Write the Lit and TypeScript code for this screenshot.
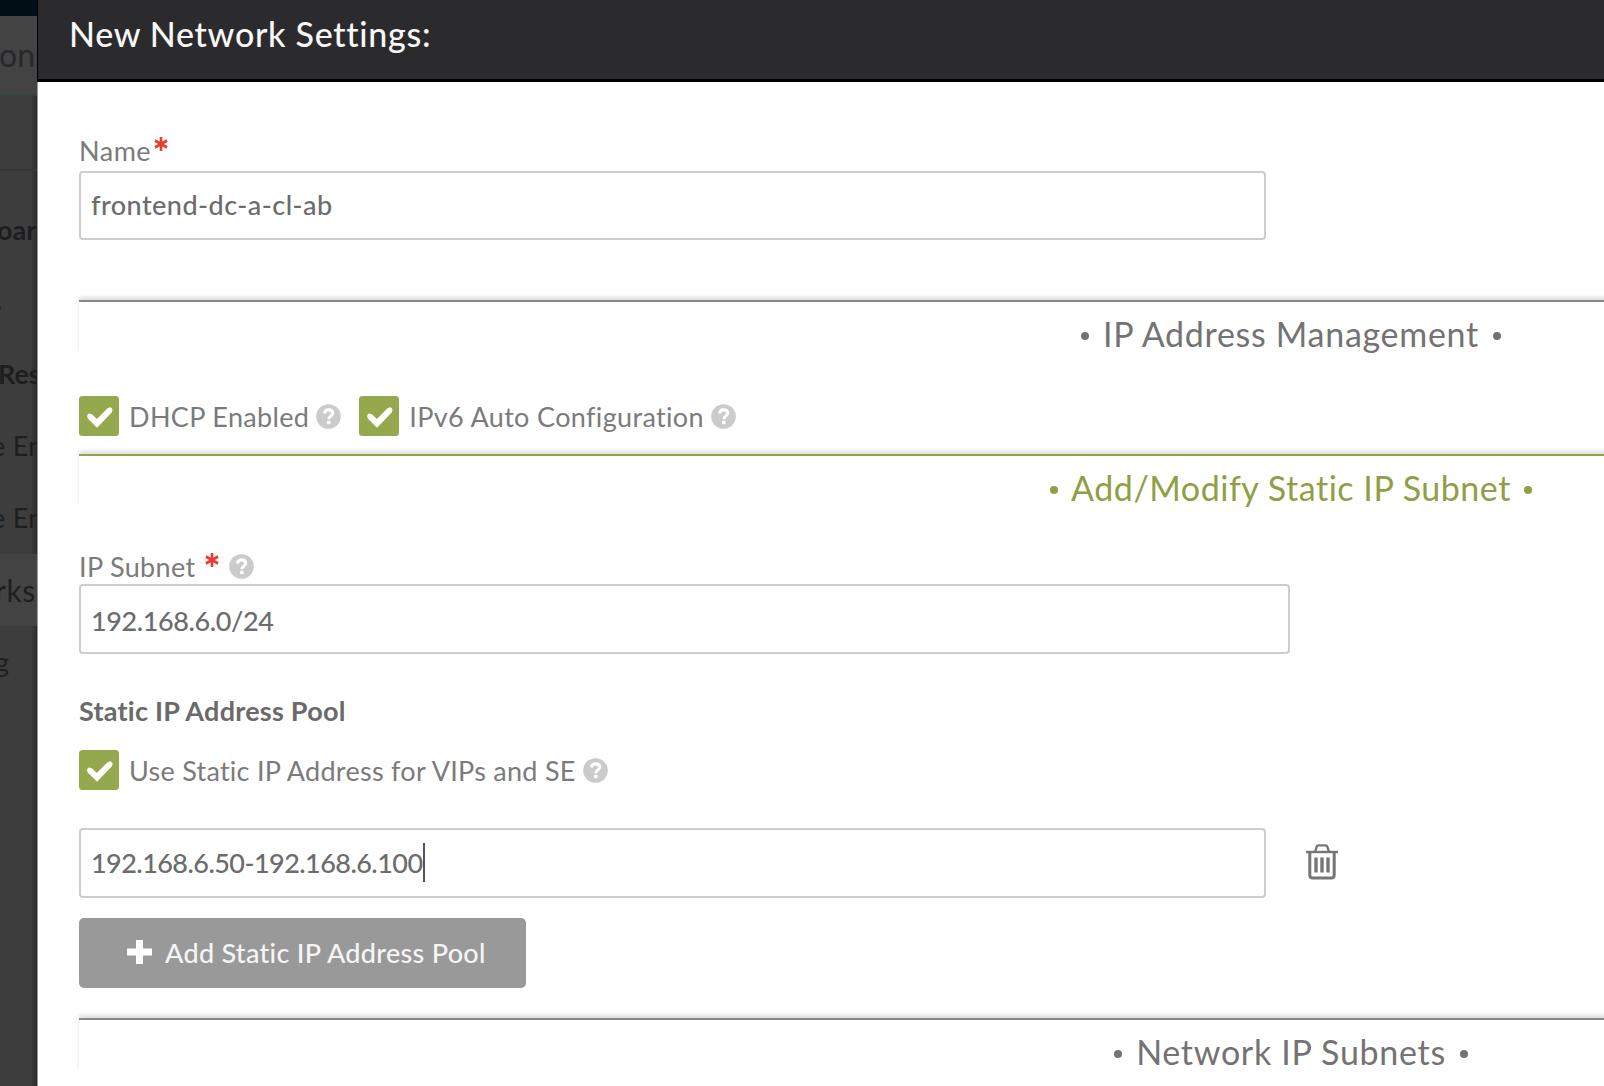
import { LitElement, html, css, svg } from 'lit';
import { customElement, property } from 'lit/decorators.js';
import { classMap } from 'lit/directives/class-map.js';

@customElement('help-icon')
class HelpIcon extends LitElement {
  static styles = css`
    :host { display: block; width: 25px; height: 25px; flex: none; }
    svg { display: block; }
  `;
  render() {
    return html`<svg width="25" height="25" viewBox="0 0 25 25">
      <circle cx="12.5" cy="12.5" r="12.3" fill="#cbcbcb"></circle>
      <path d="M8.4 9.4C8.8 6.9 10.3 5.9 12.6 5.9C15 5.9 16.7 7.2 16.7 9.2C16.7 12.1 12.8 12.2 12.8 15.2"
        fill="none" stroke="#fff" stroke-width="3.1"></path>
      <rect x="11.1" y="16.8" width="3.4" height="3.3" fill="#fff"></rect>
    </svg>`;
  }
}

@customElement('check-box')
class CheckBox extends LitElement {
  static styles = css`
    :host { display: block; width: 40px; height: 40px; flex: none; }
    svg { display: block; }
  `;
  render() {
    return html`<svg width="40" height="40" viewBox="0 0 40 40">
      <rect width="40" height="40" rx="3.5" fill="#94a94e"></rect>
      <path d="M10.6 20.2L18 27.4L31 14" fill="none" stroke="#fff" stroke-width="6"></path>
      <path d="M10.6 20.2L18 26.6L31 14" fill="none" stroke="#fff" stroke-width="5" stroke-linecap="round" stroke-linejoin="round"></path>
    </svg>`;
  }
}

@customElement('required-mark')
class RequiredMark extends LitElement {
  static styles = css`
    :host { display: block; width: 14px; height: 14px; flex: none; }
    svg { display: block; }
  `;
  render() {
    return html`<svg width="14" height="14" viewBox="0 0 14 14">
      ${[0, 60, 120].map(
        (a) => svg`<path d="M7 0V14" transform="rotate(${a} 7 7)" stroke="#ec3a2e" stroke-width="2.6"></path>`
      )}
    </svg>`;
  }
}

@customElement('section-bar')
class SectionBar extends LitElement {
  @property() label = '';
  @property({ type: Boolean, reflect: true }) active = false;
  static styles = css`
    :host {
      display: block;
      box-sizing: border-box;
      width: 2424px;
      height: 53px;
      border-top: 2px solid #878787;
      background: #fff;
      box-shadow: 0 -3px 4px rgba(0, 0, 0, 0.13);
      color: #737373;
    }
    :host([active]) { border-top-color: #94a24a; color: #8f9f45; }
    .title {
      display: flex;
      align-items: center;
      justify-content: center;
      gap: 14px;
      height: 62px;
      font-size: 34px;
      letter-spacing: 0.7px;
      white-space: nowrap;
    }
    :host([active]) .title { letter-spacing: 0.53px; gap: 13px; }
    .dot { width: 8px; height: 8px; border-radius: 50%; background: currentColor; margin-top: 6px; }
  `;
  render() {
    return html`<div class="title"><i class="dot"></i><span>${this.label}</span><i class="dot"></i></div>`;
  }
}

@customElement('app-root')
class AppRoot extends LitElement {
  static styles = css`
    :host {
      display: block;
      width: 1604px;
      height: 1086px;
      overflow: hidden;
      font-family: Lato, "Liberation Sans", sans-serif;
      font-size: 27px;
      color: #7b7b7b;
    }
    * { box-sizing: border-box; }
    .page { display: flex; height: 1086px; background: #fff; }
    .nav {
      width: 37px;
      flex: none;
      overflow: hidden;
      background: linear-gradient(90deg, transparent 31px, rgba(0, 0, 0, 0.3)), #3d3d3d;
      color: #1d1e20;
      white-space: nowrap;
    }
    .brand { height: 16px; background: #000f15; }
    .crumb {
      height: 80px;
      line-height: 77px;
      background: #434343;
      border-bottom: 2px solid #374043;
      font-size: 32px;
      color: #26282b;
    }
    .crumb span { display: inline-block; margin-left: -1px; }
    .gap { height: 75px; border-bottom: 2px solid #373737; margin-bottom: 23px; }
    .item { height: 72px; line-height: 72px; }
    .bold { font-weight: 700; }
    .current { background: #434343; }
    .item span { display: inline-block; }
    .s1 { margin-left: -3px; }
    .s2 { margin-left: -10px; }
    .s3 { margin-left: -2px; }
    .s4 { margin-left: -9px; letter-spacing: 0.3px; }
    .s5 { margin-left: -5px; font-size: 30px; letter-spacing: 0.6px; }
    .s6 { margin-left: -5px; }
    .modal { flex: 1; min-width: 0; overflow: hidden; }
    .head {
      height: 82px;
      border-bottom: 3px solid #000;
      border-left: 2px solid #000;
      margin-left: -1px;
      background: #2b2b2d;
      padding-left: 31px;
      line-height: 67px;
      font-size: 34px;
      font-weight: 500;
      letter-spacing: 0.7px;
      color: #f7f7f7;
    }
    .body { border-left: 1px solid #9a9a9a; padding: 48px 0 0 41px; height: 1004px; }
    .label { display: flex; align-items: center; height: 41px; padding-bottom: 1px; white-space: nowrap; }
    .label.subnet { height: 36px; margin-top: 41px; padding-bottom: 0; }
    .label span { letter-spacing: 0.5px; }
    .label required-mark { margin: -12px 0 0 3px; }
    .label.subnet span { letter-spacing: 0.35px; }
    .label.subnet required-mark { margin: -13px 10px 0 9px; }
    .field {
      display: flex;
      align-items: center;
      width: 1187px;
      height: 69px;
      border: 2px solid #cdcdcd;
      border-radius: 4px;
      padding: 0 0 2px 10px;
      font-weight: 500;
      color: #6c6c6c;
      letter-spacing: 0.45px;
    }
    .wide { width: 1211px; height: 70px; padding: 2px 0 0 10px; letter-spacing: -0.4px; }
    .range { height: 70px; padding-bottom: 2px; letter-spacing: -0.55px; }
    .caret { width: 2px; height: 39px; background: #555; }
    .sec1 { margin-top: 60px; }
    .sec2 { margin-top: 18px; }
    .sec3 { margin-top: 30px; }
    .checks { display: flex; align-items: center; height: 40px; white-space: nowrap; margin-top: 43px; letter-spacing: 0.35px; }
    .checks span { margin: 0 7px 0 10px; }
    .checks help-icon + check-box { margin-left: 18px; }
    .pool { height: 40px; line-height: 40px; margin-top: 37px; font-weight: 700; color: #6a6a6a; letter-spacing: 0.25px; }
    .checks.vip { margin-top: 19px; letter-spacing: 0.27px; }
    .row { display: flex; align-items: center; gap: 40px; margin-top: 38px; }
    .trash { display: block; margin-bottom: 3px; }
    .add {
      display: flex;
      align-items: center;
      gap: 13px;
      width: 447px;
      height: 70px;
      margin-top: 20px;
      padding: 0 0 2px 48px;
      border: 0;
      border-radius: 5px;
      background: #999;
      color: #f5f5f5;
      font: 500 27px Lato, sans-serif;
      letter-spacing: 0.3px;
      white-space: nowrap;
    }
  `;

  private nav = [
    { text: 'oar', pos: 's1', bold: true },
    { text: 's', pos: 's2' },
    { text: 'Res', pos: 's3', bold: true },
    { text: 'e En', pos: 's4' },
    { text: 'e En', pos: 's4' },
    { text: 'rks', pos: 's5', current: true },
    { text: 'g', pos: 's6' },
  ];

  render() {
    return html`<div class="page">
      <nav class="nav">
        <div class="brand"></div>
        <div class="crumb"><span>on</span></div>
        <div class="gap"></div>
        ${this.nav.map(
          (n) => html`<div class=${classMap({ item: true, bold: !!n.bold, current: !!n.current })}>
            <span class=${n.pos}>${n.text}</span>
          </div>`
        )}
      </nav>
      <main class="modal">
        <header class="head">New Network Settings:</header>
        <div class="body">
          <div class="label"><span>Name</span><required-mark></required-mark></div>
          <div class="field">frontend-dc-a-cl-ab</div>
          <section-bar class="sec1" label="IP Address Management"></section-bar>
          <div class="checks">
            <check-box></check-box><span>DHCP Enabled</span><help-icon></help-icon>
            <check-box></check-box><span>IPv6 Auto Configuration</span><help-icon></help-icon>
          </div>
          <section-bar class="sec2" active label="Add/Modify Static IP Subnet"></section-bar>
          <div class="label subnet"><span>IP Subnet</span><required-mark></required-mark><help-icon></help-icon></div>
          <div class="field wide">192.168.6.0/24</div>
          <div class="pool">Static IP Address Pool</div>
          <div class="checks vip">
            <check-box></check-box><span>Use Static IP Address for VIPs and SE</span><help-icon></help-icon>
          </div>
          <div class="row">
            <div class="field range">192.168.6.50-192.168.6.100<i class="caret"></i></div>
            <svg class="trash" width="32" height="36" viewBox="0 0 32 36" fill="none" stroke="#757575">
              <path d="M0 8H32" stroke-width="2.4"></path>
              <path d="M9 8L10.7 2.6Q11.2 1.4 12.5 1.4H19.5Q20.8 1.4 21.3 2.6L23 8" stroke-width="2.4"></path>
              <path d="M3.8 8V31Q3.8 34 6.8 34H25.2Q28.2 34 28.2 31V8" stroke-width="3"></path>
              <path d="M10 13.5V28.5M16 13.5V28.5M22 13.5V28.5" stroke-width="3.4"></path>
            </svg>
          </div>
          <button class="add">
            <svg width="25" height="24" viewBox="0 0 25 24"><path d="M12.5 0V24M0 12H25" stroke="#fff" stroke-width="7"></path></svg>
            <span>Add Static IP Address Pool</span>
          </button>
          <section-bar class="sec3" label="Network IP Subnets"></section-bar>
        </div>
      </main>
    </div>`;
  }
}
